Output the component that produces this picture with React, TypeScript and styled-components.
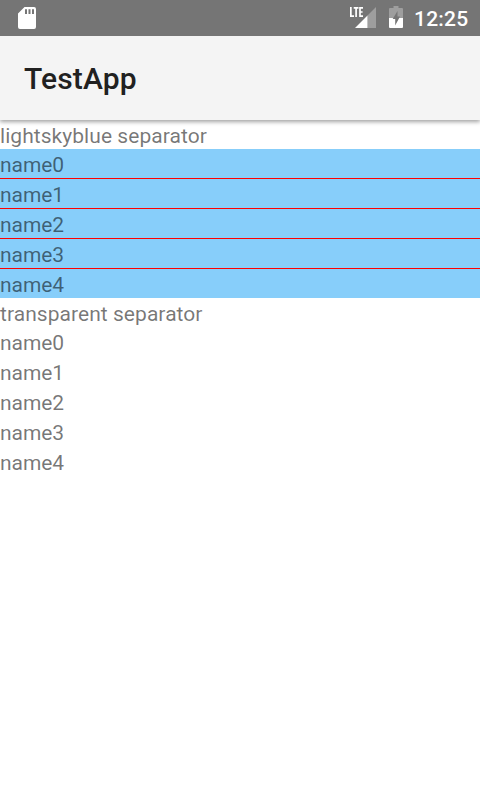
import React from "react";
import styled, { createGlobalStyle } from "styled-components";

const GlobalStyle = createGlobalStyle`
  body {
    margin: 0;
    background: #fff;
    font-family: Roboto, sans-serif;
  }
`;

const Screen = styled.div`
  display: flex;
  flex-direction: column;
  width: 480px;
  height: 800px;
  overflow: hidden;
  background: #fff;
`;

const StatusBar = styled.header`
  display: flex;
  align-items: center;
  flex: none;
  height: 36px;
  padding: 0 12px 0 15px;
  box-sizing: border-box;
  background: #757575;
`;

const StatusIcon = styled.svg<{ $gap?: number }>`
  display: block;
  flex: none;
  margin-right: ${(p) => p.$gap ?? 0}px;
`;

const Spacer = styled.div`
  flex: 1;
`;

const Clock = styled.time`
  width: 54px;
  padding-top: 2px;
  font-size: 21px;
  line-height: 24px;
  font-weight: 500;
  letter-spacing: 0.2px;
  color: #fff;
`;

const ActionBar = styled.div`
  display: flex;
  align-items: center;
  flex: none;
  height: 84px;
  padding: 2px 24px 0;
  box-sizing: border-box;
  background: #f4f4f4;
  box-shadow: 0 2px 4px rgba(0, 0, 0, 0.36);
  clip-path: inset(0 0 -8px 0);
  z-index: 1;
`;

const Title = styled.h1`
  margin: 0;
  font-size: 30px;
  line-height: 36px;
  font-weight: 500;
  letter-spacing: 0.15px;
  color: #212121;
`;

const Label = styled.div<{ $spacing?: number }>`
  height: 29px;
  padding-top: 3px;
  box-sizing: border-box;
  font-size: 21px;
  line-height: 27px;
  letter-spacing: ${(p) => p.$spacing ?? 0}px;
  color: rgba(0, 0, 0, 0.54);
  white-space: nowrap;
`;

const List = styled.ul<{ $background: string; $separator: string }>`
  margin: 0;
  padding: 0;
  list-style: none;
  background: ${(p) => p.$background};

  li + li {
    border-top: 1px solid ${(p) => p.$separator};
  }
`;

const names = ["name0", "name1", "name2", "name3", "name4"];

function NameList({ background, separator }: { background: string; separator: string }) {
  return (
    <List $background={background} $separator={separator}>
      {names.map((name) => (
        <li key={name}>
          <Label $spacing={-0.05}>{name}</Label>
        </li>
      ))}
    </List>
  );
}

export default function App() {
  return (
    <>
      <GlobalStyle />
      <Screen>
        <StatusBar>
          <StatusIcon width="24" height="36" viewBox="0 0 24 36">
            <path
              fill="#fff"
              fillRule="evenodd"
              d="M9.5 7H19a2 2 0 0 1 2 2v18a2 2 0 0 1-2 2H5a2 2 0 0 1-2-2V13.500ZM10 9.300v4.700h2V9.300ZM13.500 9.300v4.700h2V9.300ZM17 9.300v4.700h2V9.300Z"
            />
          </StatusIcon>
          <Spacer />
          <StatusIcon width="27" height="36" viewBox="0 0 27 36" $gap={13}>
            <path fill="#fff" fillOpacity=".3" d="M27 7v21h-8.500V15.500Z" />
            <path fill="#fff" d="M18.500 15.500V28H6Z" />
            <path
              fill="none"
              stroke="#fff"
              strokeWidth="1.700"
              d="M1.850 7v9.150H5M4.700 7.850h4.800M7.100 7.850V17M14 7.850h-3v8.300h3M11 12h2.600"
            />
          </StatusIcon>
          <StatusIcon width="14" height="36" viewBox="0 0 14 36" $gap={11}>
            <path
              fill="#fff"
              fillOpacity=".3"
              d="M4.500 6h5v2H13q1 0 1 1v9H0V9q0-1 1-1h3.500Z"
            />
            <path fill="#fff" d="M0 18h14v9q0 1-1 1H1q-1 0-1-1Z" />
            <path fill="#757575" d="M8.500 11v5.500H11L6.200 25.500V19H3.700Z" />
          </StatusIcon>
          <Clock>12:25</Clock>
        </StatusBar>
        <ActionBar>
          <Title>TestApp</Title>
        </ActionBar>
        <main>
          <Label $spacing={0.05}>lightskyblue separator</Label>
          <NameList background="lightskyblue" separator="red" />
          <Label $spacing={0.05}>transparent separator</Label>
          <NameList background="transparent" separator="transparent" />
        </main>
      </Screen>
    </>
  );
}
